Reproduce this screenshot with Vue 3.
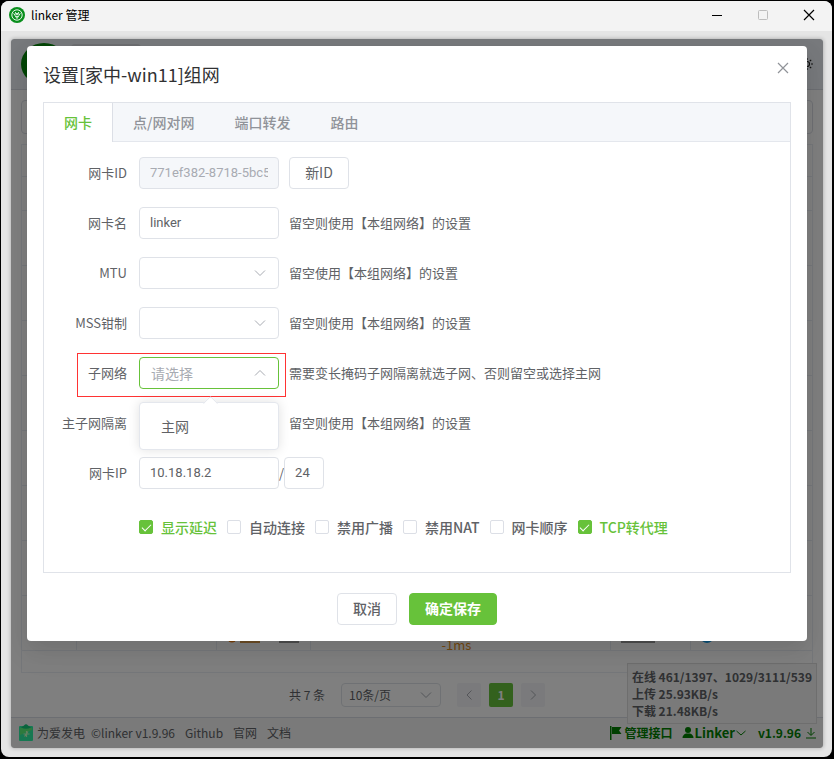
<script setup>
import { ref } from 'vue'

const tabs = ['网卡', '点/网对网', '端口转发', '路由']
const activeTab = ref('网卡')

const form = ref({ id: '771ef382-8718-5bc5-9a2e', name: 'linker', mtu: '', mss: '', subnet: '', isolate: '', ip: '10.18.18.2', prefix: '24' })

const options = ref([
  { label: '显示延迟', on: true },
  { label: '自动连接', on: false },
  { label: '禁用广播', on: false },
  { label: '禁用NAT', on: false },
  { label: '网卡顺序', on: false },
  { label: 'TCP转代理', on: true }
])
</script>

<template>
  <div class="window">
    <header class="titlebar">
      <svg class="app-icon" viewBox="0 0 16 16">
        <circle cx="8" cy="8" r="8" fill="#0a8f1d" />
        <circle cx="8" cy="8" r="5.2" fill="none" stroke="#fff" stroke-width=".9" />
        <path d="M4.600 6.200 8 11.600l3.400-5.400M6.200 5 8 8.200 9.800 5M5.400 7.600 8 6.200l2.600 1.400M6.600 9.500h2.800" fill="none" stroke="#fff" stroke-width=".8" />
      </svg>
      <span class="app-title">linker 管理</span>
      <div class="controls">
        <button type="button" aria-label="最小化"><svg viewBox="0 0 12 12"><path d="M1 6.500h10" stroke="#000" /></svg></button>
        <button type="button" aria-label="最大化" disabled><svg viewBox="0 0 12 12"><rect x="1.500" y="1.500" width="9" height="9" rx="1" fill="none" stroke="#bdbdbd" /></svg></button>
        <button type="button" aria-label="关闭"><svg viewBox="0 0 12 12"><path d="m1 1 10 10M11 1 1 11" stroke="#000" stroke-width="1.200" /></svg></button>
      </div>
    </header>

    <div class="client">
      <div class="page">
        <div class="page-head">
          <span class="logo"></span>
          <span class="host"></span>
          <svg class="sun" viewBox="0 0 14 14"><circle cx="7" cy="7" r="2.500" fill="none" stroke="#222" stroke-width="1.200" /><path d="M7 1v2M7 11v2M1 7h2M11 7h2M2.800 2.800l1.400 1.400M9.800 9.800l1.400 1.400M11.200 2.800 9.800 4.200M4.200 9.800l-1.400 1.400" stroke="#222" stroke-width="1.200" /></svg>
        </div>
        <div class="page-body">
          <div class="search"></div>
          <div class="grid">
            <div class="grid-head"></div>
            <div class="grid-head filter"></div>
            <div v-for="n in 7" :key="n" class="grid-row"></div>
            <div class="grid-row last">
              <span></span>
              <span></span>
              <span class="peer"><svg viewBox="0 0 12 12"><circle cx="6" cy="6" r="5.500" fill="#ef7d12" /></svg><i class="orange"></i><i class="gray"></i></span>
              <span class="delay">-1ms</span>
              <span class="version"><i class="gray"></i></span>
              <span class="system"><i class="blue"></i></span>
            </div>
            <div class="grid-foot"></div>
          </div>
          <div class="pager">
            <span>共 7 条</span>
            <div class="picker small">
              <select aria-label="每页条数"><option>10条/页</option></select>
              <svg viewBox="0 0 14 14"><path d="m2 4.500 5 5 5-5" /></svg>
            </div>
            <div class="pages">
              <button type="button" aria-label="上一页"><svg viewBox="0 0 14 14"><path d="M9.500 2.500 5 7l4.500 4.500" /></svg></button>
              <button type="button" class="current">1</button>
              <button type="button" aria-label="下一页"><svg viewBox="0 0 14 14"><path d="M5 2.500 9.500 7 5 11.500" /></svg></button>
            </div>
          </div>
        </div>
        <footer class="page-foot">
          <a href="#" class="donate">
            <svg viewBox="0 0 14 17"><rect y="2" width="14" height="15" rx="1" fill="#2ef0a4" /><path d="M1 4h12v2L1 11z" fill="#7cf860" opacity=".6" /><path d="M2 3.500 5 1.500Q7-1 9 1.500l3 2Q7 6 2 3.500z" fill="#14c878" /><path d="M7.500 7v6M4.500 10h6M9 7.500l-3.500 5" fill="none" stroke="#c8ffc0" stroke-width="1.200" /></svg>
            为爱发电
          </a>
          <a href="#">©linker v1.9.96</a>
          <a href="#" class="wide">Github</a>
          <a href="#" class="wide">官网</a>
          <a href="#" class="wide">文档</a>
          <div class="status">
            <a href="#"><svg class="flag" viewBox="0 0 12 14"><path d="M0 0h1.500v14H0zM2 1h9.500L9 4.500 11.500 8H2z" /></svg>管理接口</a>
            <a href="#" class="user"><svg class="person" viewBox="0 0 12 12"><circle cx="6" cy="3" r="3" /><path d="M4 6.500h4c2.500 1 3.500 2.500 3.500 4.500H.5c0-2 1-3.500 3.500-4.500z" /></svg>Linker<svg class="line" viewBox="0 0 12 12"><path d="m1.500 4 4.500 4 4.500-4" /></svg></a>
            <a href="#" class="release">v1.9.96<svg class="line" viewBox="0 0 12 12"><path d="M6 1v7M2.500 5 6 8.500 9.500 5M1 11h10" /></svg></a>
          </div>
          <div class="stats">
            <p>在线 461/1397、1029/3111/539</p>
            <p>上传 25.93KB/s</p>
            <p>下载 21.48KB/s</p>
          </div>
        </footer>
      </div>

      <div class="overlay">
        <section class="dialog" role="dialog" aria-labelledby="dialog-title">
          <div class="dialog-head">
            <h1 id="dialog-title">设置[家中-win11]组网</h1>
            <button type="button" class="close" aria-label="关闭"><svg viewBox="0 0 12 12"><path d="m1 1 10 10M11 1 1 11" stroke="#909399" stroke-width="1.200" /></svg></button>
          </div>

          <div class="tabs">
            <div class="tab-bar" role="tablist">
              <button v-for="t in tabs" :key="t" type="button" role="tab" :class="{ active: t === activeTab }" :aria-selected="t === activeTab" @click="activeTab = t">{{ t }}</button>
            </div>
            <form class="panel" @submit.prevent>
              <div class="row">
                <label for="f-id">网卡ID</label>
                <input id="f-id" v-model="form.id" type="text" disabled />
                <button type="button" class="btn tip">新ID</button>
              </div>
              <div class="row">
                <label for="f-name">网卡名</label>
                <input id="f-name" v-model="form.name" type="text" />
                <span class="tip">留空则使用【本组网络】的设置</span>
              </div>
              <div class="row">
                <label for="f-mtu">MTU</label>
                <div class="picker"><select id="f-mtu" v-model="form.mtu"><option value=""></option></select><svg viewBox="0 0 14 14"><path d="m2 4.500 5 5 5-5" /></svg></div>
                <span class="tip">留空使用【本组网络】的设置</span>
              </div>
              <div class="row">
                <label for="f-mss">MSS钳制</label>
                <div class="picker"><select id="f-mss" v-model="form.mss"><option value=""></option></select><svg viewBox="0 0 14 14"><path d="m2 4.500 5 5 5-5" /></svg></div>
                <span class="tip">留空则使用【本组网络】的设置</span>
              </div>
              <div class="row">
                <div class="marked">
                  <label for="f-subnet">子网络</label>
                  <div class="picker open">
                    <select id="f-subnet" v-model="form.subnet"><option value="">请选择</option></select>
                    <svg viewBox="0 0 14 14"><path d="m2 9.500 5-5 5 5" /></svg>
                    <ul class="menu" role="listbox"><li role="option">主网</li></ul>
                  </div>
                </div>
                <span class="tip">需要变长掩码子网隔离就选子网、否则留空或选择主网</span>
              </div>
              <div class="row">
                <label for="f-isolate">主子网隔离</label>
                <div class="picker"><select id="f-isolate" v-model="form.isolate"><option value=""></option></select></div>
                <span class="tip">留空则使用【本组网络】的设置</span>
              </div>
              <div class="row">
                <label for="f-ip">网卡IP</label>
                <input id="f-ip" v-model="form.ip" type="text" />
                <span>/</span>
                <input v-model="form.prefix" class="prefix" type="text" aria-label="掩码长度" />
              </div>
              <div class="checks">
                <label v-for="o in options" :key="o.label" :class="{ on: o.on }"><input v-model="o.on" type="checkbox" />{{ o.label }}</label>
              </div>
            </form>
          </div>

          <div class="actions">
            <button type="button" class="btn">取消</button>
            <button type="button" class="btn primary">确定保存</button>
          </div>
        </section>
      </div>
    </div>
  </div>
</template>

<style>
body {
  background: #000;
}
</style>

<style scoped>
* {
  box-sizing: border-box;
}
.window {
  display: flex;
  flex-direction: column;
  min-height: calc(100vh - 3px);
  margin: 1px 2px 2px 1px;
  border-radius: 8px;
  overflow: hidden;
  background: #e5e5e5;
  font: 13px/20px "Noto Sans CJK SC", sans-serif;
  color: #606266;
}
button, input, select {
  font: inherit;
  color: inherit;
  margin: 0;
}
button {
  padding: 0;
  border: 0;
  background: none;
}
svg {
  display: block;
  flex: none;
}
a {
  color: inherit;
  text-decoration: none;
}
p, h1, ul {
  margin: 0;
  padding: 0;
}
.titlebar {
  display: flex;
  align-items: center;
  height: 30px;
  padding: 0 0 2px 8px;
  background: #f3f3f3;
  color: #000;
  font-size: 12px;
}
.app-icon {
  width: 16px;
  height: 16px;
  margin-right: 6px;
}
.controls {
  display: flex;
  margin-left: auto;
}
.controls button {
  display: flex;
  align-items: center;
  justify-content: center;
  width: 46px;
  height: 28px;
}
.controls svg {
  width: 12px;
  height: 12px;
}
.client {
  position: relative;
  display: flex;
  flex: 1;
  margin: 8px 9px 9px 10px;
  border-radius: 3px;
  overflow: hidden;
  box-shadow: 0 0 4px rgba(0, 0, 0, 0.3);
}
.page {
  display: flex;
  flex-direction: column;
  flex: 1;
  background: #fff;
  font-size: 12px;
}
.page-head {
  display: flex;
  align-items: center;
  height: 51px;
  padding: 0 9px 0 10px;
  border-bottom: 1px solid #d8dce5;
  background: #eff3f8;
}
.logo {
  width: 46px;
  height: 42px;
  border-radius: 50%;
  background: #078a0c;
}
.host {
  width: 70px;
  height: 40px;
  margin-left: 4px;
  border-radius: 4px;
  background: #dadde2;
}
.sun {
  width: 14px;
  height: 14px;
  margin-left: auto;
}
.page-body {
  display: flex;
  flex-direction: column;
  flex: 1;
  padding: 10px;
}
.search {
  height: 34px;
  margin-bottom: 10px;
  border: 1px solid #dcdfe6;
  border-radius: 4px;
}
.grid {
  border: 1px solid #ebeef5;
}
.grid-head {
  height: 32px;
  border-bottom: 1px solid #ebeef5;
}
.filter {
  height: 34px;
}
.grid-row {
  height: 55px;
  border-bottom: 1px solid #ebeef5;
}
.last {
  display: grid;
  grid-template-columns: 55px 140px 94px 300px 80px 1fr;
}
.last span {
  display: flex;
  align-items: flex-end;
  gap: 3px;
  height: 54px;
  padding: 0 10px 7px;
  border-right: 1px solid #ebeef5;
}
.last span:last-child {
  border-right: 0;
}
.peer svg {
  width: 10px;
  height: 10px;
}
.orange, .gray, .blue {
  width: 20px;
  height: 10px;
  background: #d89b4c;
}
.gray {
  margin-left: 16px;
  background: #9b9b9b;
}
.version .gray {
  width: 34px;
  margin-left: 0;
}
.blue {
  width: 12px;
  border-radius: 50%;
  background: #149be6;
}
.last .delay {
  justify-content: center;
  padding: 0 18px 0 10px;
  font-size: 13px;
  line-height: 10px;
  color: #e6901e;
}
.grid-foot {
  height: 21px;
}
.pager {
  display: flex;
  align-items: center;
  justify-content: center;
  gap: 16px;
  margin-top: 10px;
}
.pages {
  display: flex;
  gap: 8px;
}
.pages button {
  display: flex;
  align-items: center;
  justify-content: center;
  width: 24px;
  height: 24px;
  border-radius: 2px;
  background: #f4f5f8;
}
.pages svg, .picker svg {
  width: 14px;
  height: 14px;
  fill: none;
  stroke: #a8abb2;
  stroke-width: 1;
}
.pages .current {
  background: #67c23a;
  color: #fff;
  font-weight: 700;
}
.page-foot {
  position: relative;
  display: flex;
  align-items: center;
  height: 31px;
  padding: 0 6px 0 8px;
  border-top: 1px solid #d8dce5;
  background: #f5f5f5;
}
.page-foot > a {
  margin-right: 6px;
}
.page-foot > .wide {
  margin: 0 6px 0 4px;
}
.donate {
  display: flex;
  align-items: center;
  gap: 4px;
}
.donate svg {
  width: 14px;
  height: 17px;
  margin-bottom: 2px;
}
.status {
  display: flex;
  margin-left: auto;
  color: #008000;
  font-weight: 700;
}
.status a {
  display: flex;
  align-items: center;
}
.status .user {
  margin: 0 11px 0 10px;
  font-size: 13px;
}
.status svg {
  width: 12px;
  height: 12px;
  fill: #008000;
}
.status .flag {
  height: 14px;
  margin-right: 2px;
}
.status .line {
  fill: none;
  stroke: #008000;
}
.release .line {
  margin-left: 4px;
}
.stats {
  position: absolute;
  right: 6px;
  bottom: 24px;
  padding: 4px;
  border: 1px solid #ddd;
  background: #f5f5f5;
  font-weight: 700;
  line-height: 17px;
}
.overlay {
  position: absolute;
  inset: 0;
  padding: 7px 16px;
  background: rgba(0, 0, 0, 0.5);
}
.dialog {
  padding: 16px;
  border-radius: 4px;
  background: #fff;
  box-shadow: 0 12px 32px 4px rgba(0, 0, 0, 0.04), 0 8px 20px rgba(0, 0, 0, 0.08);
}
.dialog-head {
  display: flex;
  align-items: flex-start;
  justify-content: space-between;
  height: 40px;
}
.dialog-head h1 {
  font-size: 18px;
  font-weight: 400;
  line-height: 24px;
  color: #303133;
}
.close {
  width: 16px;
  height: 12px;
}
.close svg {
  width: 12px;
  height: 12px;
  margin: 0 auto;
}
.tabs {
  border: 1px solid #e0e3e9;
}
.tab-bar {
  display: flex;
  height: 39px;
  border-bottom: 1px solid #e4e7ed;
  background: #f5f7fa;
}
.tab-bar button {
  height: 39px;
  padding: 0 20px 2px;
  font-size: 14px;
  font-weight: 500;
  color: #909399;
}
.tab-bar .active {
  border-right: 1px solid #dcdfe6;
  background: #fff;
  color: #67c23a;
}
.panel {
  padding: 15px 15px 29px;
}
.row, .marked {
  display: flex;
  align-items: center;
  height: 32px;
}
.row {
  margin-bottom: 18px;
}
.row label {
  flex: none;
  width: 80px;
  padding-right: 12px;
  text-align: right;
}
.row input, .picker {
  width: 140px;
  height: 32px;
  border: 1px solid #dfe2e8;
  border-radius: 4px;
  background: #fff;
}
.row input {
  padding: 0 10px 2px;
  outline: 0;
  font-family: Roboto, "Noto Sans CJK SC", sans-serif;
}
.row input:disabled {
  background: #f5f7fa;
  color: #a8abb2;
}
.row .prefix {
  width: 40px;
}
.picker {
  position: relative;
  display: flex;
  align-items: center;
}
.picker select {
  width: 100%;
  height: 100%;
  padding: 0 30px 0 11px;
  border: 0;
  outline: 0;
  appearance: none;
  background: transparent;
}
.picker > svg {
  position: absolute;
  right: 11px;
  pointer-events: none;
}
.picker.open {
  border-color: #67c23a;
}
.open select {
  color: #a8abb2;
  font-size: 14px;
}
.picker.small {
  width: 100px;
  height: 24px;
}
.small select {
  padding-left: 7px;
}
.small > svg {
  right: 7px;
}
.marked {
  position: relative;
}
.marked::after {
  content: "";
  position: absolute;
  inset: -4px -7px -8px 18px;
  border: 1px solid #f33;
  pointer-events: none;
}
.menu {
  position: absolute;
  z-index: 2;
  top: 44px;
  left: -1px;
  width: 140px;
  padding: 6px 0;
  border: 1px solid #e4e7ed;
  border-radius: 4px;
  background: #fff;
  box-shadow: 0 0 12px rgba(0, 0, 0, 0.12);
  list-style: none;
  font-size: 14px;
}
.menu::before {
  content: "";
  position: absolute;
  top: -5px;
  left: 65px;
  width: 9px;
  height: 9px;
  border: 1px solid #e4e7ed;
  border-color: #e4e7ed transparent transparent #e4e7ed;
  border-radius: 2px 0 0;
  background: #fff;
  transform: rotate(45deg);
}
.menu li {
  padding: 0 21px;
  line-height: 34px;
}
.tip {
  margin-left: 10px;
}
.btn {
  height: 32px;
  padding: 0 15px 2px;
  border: 1px solid #dfe2e8;
  border-radius: 4px;
  background: #fff;
  font-size: 14px;
  font-weight: 500;
}
.row .btn {
  width: 60px;
  padding: 0 0 2px;
  font-weight: 400;
}
.btn.primary {
  border-color: #67c23a;
  background: #67c23a;
  color: #fff;
  font-weight: 700;
}
.checks {
  display: flex;
  flex-wrap: wrap;
  gap: 10px;
  padding: 4px 0 0 80px;
}
.checks label {
  display: flex;
  align-items: center;
  gap: 8px;
  height: 32px;
  font-size: 14px;
  font-weight: 500;
}
.checks .on {
  color: #67c23a;
}
.checks input {
  display: grid;
  place-items: center;
  width: 14px;
  height: 14px;
  border: 1px solid #dcdfe6;
  border-radius: 2px;
  appearance: none;
  background: #fff;
}
.checks input:checked {
  border-color: #67c23a;
  background: #67c23a;
}
.checks input:checked::after {
  content: "";
  width: 4px;
  height: 8px;
  margin-top: -2px;
  border: solid #fff;
  border-width: 0 1px 1px 0;
  transform: rotate(45deg);
}
.actions {
  display: flex;
  justify-content: center;
  gap: 12px;
  padding-top: 20px;
}
</style>
